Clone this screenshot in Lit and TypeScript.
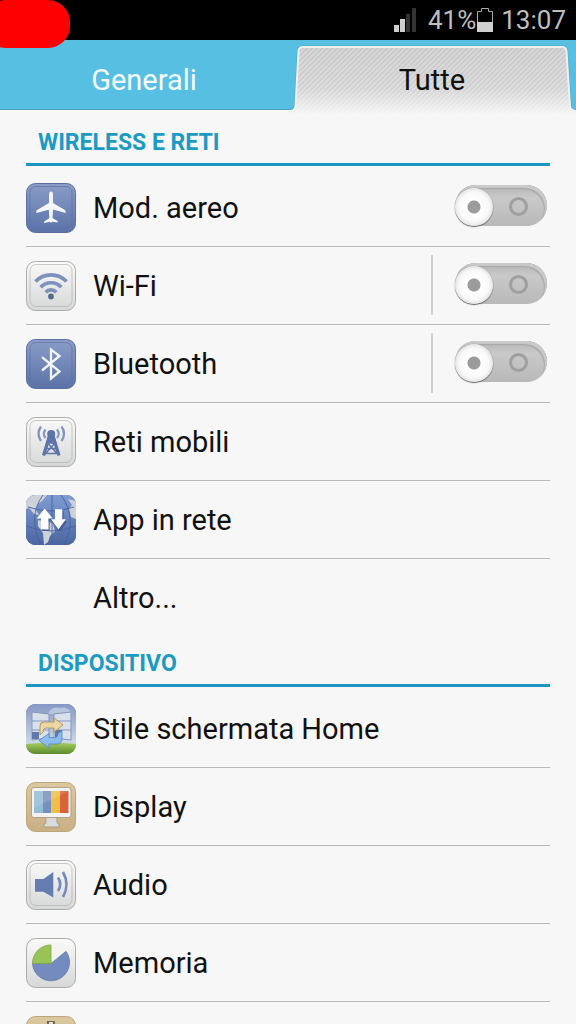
import { LitElement, html, svg, css, nothing } from "lit";
import type { SVGTemplateResult } from "lit";
import { customElement, property } from "lit/decorators.js";

const TILE_COLOURS: Record<string, [string, string, string]> = {
  blue: ["#8a9dc8", "#5a72a8", "#5a6f9f"],
  light: ["#fafaf8", "#d6d8d8", "#acacac"],
  tan: ["#dcc8a0", "#c9b083", "#bda67c"],
};

const GLYPHS: Record<string, { tile: string; rim?: boolean; art: SVGTemplateResult }> = {
  plane: {
    tile: "blue",
    rim: true,
    art: svg`<path fill="#f4f6fa" d="M25 8.5c1.5 0 2 1.6 2 3.400v8l11.500 6.800c1 .7 1.300 1.600 1.300 3.300l-12.700-3.500-.6 8.500 4.600 2.700c.7.5.8 1 .8 1.900L26 38.800 25 40l-1-1.200-6 1.100c0-.9.1-1.400.8-1.900l4.600-2.700-.6-8.500L10.200 30c0-1.700.3-2.600 1.300-3.300L23 19.900v-8c0-1.800.5-3.400 2-3.400z"/>`,
  },
  wifi: {
    tile: "light",
    rim: true,
    art: svg`<g fill="none" stroke="#7d91be" stroke-width="3.600">
        <path d="M9.500 20.500A21.500 21.500 0 0 1 40.500 20.500"/>
        <path d="M14.700 26.200A14 14 0 0 1 35.300 26.200"/>
        <path d="M19.600 31.200A7.500 7.500 0 0 1 30.400 31.200"/></g>
      <circle cx="25" cy="35.500" r="2.900" fill="#56688c"/>`,
  },
  bluetooth: {
    tile: "blue",
    rim: true,
    art: svg`<path fill="none" stroke="#f2f5fb" stroke-width="2.300" d="M16 18.200 33.500 32.500 25 39.500V10.500L33.500 17 16 31.500"/>`,
  },
  tower: {
    tile: "light",
    rim: true,
    art: svg`<g fill="none" stroke="#5d74a8" stroke-width="2">
        <path d="M23.500 19 17.500 38.500M27 19 33 38.500" stroke-width="3.200"/>
        <path d="M21.500 26h7.500M20 31.500h10.500M19 36.500h13M21.500 26 31 36.500M29 26 19.500 36.500" stroke-width="1.500"/>
        <g stroke="#8496bd" stroke-width="2.400"><path d="M19.500 12.500a6.500 6.500 0 0 0 0 8.500M31 12.500a6.500 6.500 0 0 1 0 8.500"/>
        <path d="M15 9.500a12 12 0 0 0 0 14.500M35.500 9.500a12 12 0 0 1 0 14.500"/></g></g>
      <path fill="#5d74a8" d="M22 19h6.500l2 7H20z"/>
      <circle cx="25.200" cy="17" r="4" fill="#5d74a8"/>`,
  },
  globe: {
    tile: "blue",
    art: svg`<clipPath id="globe-clip"><rect width="50" height="50" rx="9"/></clipPath>
      <linearGradient id="globe-sea" x2="0" y2="1"><stop stop-color="#809cd4"/><stop offset="1" stop-color="#4a66a0"/></linearGradient>
      <g clip-path="url(#globe-clip)">
        <rect width="50" height="50" fill="url(#globe-sea)"/>
        <path fill="#ccd2d8" d="M0 0h21l-4 5-5 4-2 6 3 5-5-1-5-6-3 1zM42 4l8 2v18l-5-2-2-8 3-4zM12 25l6-1 9 5 2 7-5 5-2 6-4 3-1-12-5-7z"/>
        <path fill="none" stroke="#45629f" stroke-width=".9" d="M26 0v50M17 0Q1 22 15 50M35 0q17 24 3 50M2 12q23 8 46 0M0 31q25 10 50 0"/>
        <path fill="#263c70" opacity=".45" d="M20 15.600 28 25.600H24V36H16V25.600H12zM30.500 16h7.300v10.300h3.500L34 36.300l-8-10h4.500z"/>
        <path fill="#fff" d="M18.700 13.600 26.700 23.600H22.400V34.300H15V23.600H10.700zM29 14.300h7.300v10h3.500L32.500 34.300 25 24.300h4z"/>
      </g>`,
  },
  home: {
    tile: "blue",
    art: svg`<clipPath id="home-clip"><rect width="50" height="50" rx="9"/></clipPath>
      <linearGradient id="home-sky" x2="0" y2="1"><stop stop-color="#8498c4"/><stop offset=".75" stop-color="#c9d6e6"/></linearGradient>
      <linearGradient id="home-grass" x2="0" y2="1"><stop stop-color="#a6cf60"/><stop offset="1" stop-color="#5c8a2c"/></linearGradient>
      <g clip-path="url(#home-clip)">
        <rect width="50" height="50" fill="url(#home-sky)"/>
        <path fill="#b6c5de" d="M22 10q3-8 12-6 8-2 12 6z"/>
        <path fill="url(#home-grass)" d="M0 40q25-3 50 0v10H0z"/>
        <g fill="#d8e0ec" stroke="#8597b8" stroke-width="1"><path d="M6 8l17 2v24l-17 2zM28 10l17-2v28l-17-2z"/><path d="M6 17h17M6 26h17M28 17h17M28 26h17"/></g>
        <path fill="#6078aa" d="M6 28h7v7H6zM29 26h7v9h-7z"/>
        <path fill="#ecd6a2" stroke="#a98c55" stroke-width=".8" d="M14 31v-9q0-4 4-4h10v-4l9 7-9 7v-4h-8q-3 0-3 4z"/>
        <path fill="#8dbcee" stroke="#5886bf" stroke-width=".8" d="M36 27v7q0 6-5 6h-8v4l-10-7.500 10-7v4h6q3 0 3-4z"/>
      </g>`,
  },
  display: {
    tile: "tan",
    art: svg`<path fill="#d9dadc" stroke="#9b8c70" stroke-width=".7" d="M20 35h11v6l2 1v3H18v-3l2-1z"/>
      <rect x="5.500" y="5.500" width="39.500" height="30" rx="2.500" fill="#f3f3f3" stroke="#a39577" stroke-width=".8"/>
      <path fill="#94bdd6" d="M8 9h9v22H8z"/><path fill="#7890bc" d="M17 9h8v22h-8z"/><path fill="#efbf48" d="M25 9h9v22h-9z"/><path fill="#d9633a" d="M34 9h8.500v22H34z"/>
      <path fill="#fff" opacity=".15" d="M8 9h34.500L8 26z"/>`,
  },
  audio: {
    tile: "light",
    rim: true,
    art: svg`<path fill="#647cb0" d="M9 19h8.500L27.300 12v25.500L17.500 31.700H9z"/>
      <g fill="none" stroke="#7288b8" stroke-width="2.600"><path d="M32 17.500q4.500 7 0 13.500"/><path d="M37 12q7 12.500 0 25"/></g>`,
  },
  memory: {
    tile: "light",
    art: svg`<path fill="#748bbf" stroke="#5f74a4" stroke-width=".7" d="M25 25.500 40 13.300A18.600 18.600 0 1 1 6.400 25.500z"/>
      <path fill="#97c455" stroke="#7ca046" stroke-width=".7" d="M25 25.500H6.400A18.600 18.600 0 0 1 25 6.900z"/>
      <path fill="#f3f3f0" d="M26 7a18.600 18.600 0 0 1 13.500 5.500L26 23.500z"/>`,
  },
  battery: {
    tile: "tan",
    art: svg`<path fill="#6e675a" d="M21 5h8v3h6v34H15V8h6z"/><path fill="#e7e1d2" d="M23 6h4v4h-4z"/>`,
  },
};

@customElement("tile-icon")
export class TileIcon extends LitElement {
  @property() name = "";

  static styles = css`
    :host { display: block; width: 50px; height: 50px; flex: none; }
    .art { display: block; width: 100%; height: 100%; }
  `;

  render() {
    const glyph = GLYPHS[this.name];
    if (!glyph) return nothing;
    const [top, bottom, edge] = TILE_COLOURS[glyph.tile];
    return html`<svg class="art" viewBox="0 0 50 50" aria-hidden="true">
      <linearGradient id="tile" x2="0" y2="1">
        <stop stop-color=${top} /><stop offset="1" stop-color=${bottom} />
      </linearGradient>
      <rect x=".5" y=".5" width="49" height="49" rx="9" fill="url(#tile)" stroke=${edge} />
      ${glyph.rim
        ? svg`<rect x="4" y="3.500" width="42" height="42" rx="6" fill="none" stroke=${edge} stroke-width=".8" opacity=".8"/>`
        : nothing}
      ${glyph.art}
    </svg>`;
  }
}

interface Entry {
  icon?: string;
  label: string;
  toggle?: boolean;
  split?: boolean;
}

const SECTIONS: { title: string; entries: Entry[] }[] = [
  {
    title: "WIRELESS E RETI",
    entries: [
      { icon: "plane", label: "Mod. aereo", toggle: true },
      { icon: "wifi", label: "Wi-Fi", toggle: true, split: true },
      { icon: "bluetooth", label: "Bluetooth", toggle: true, split: true },
      { icon: "tower", label: "Reti mobili" },
      { icon: "globe", label: "App in rete" },
      { label: "Altro..." },
    ],
  },
  {
    title: "DISPOSITIVO",
    entries: [
      { icon: "home", label: "Stile schermata Home" },
      { icon: "display", label: "Display" },
      { icon: "audio", label: "Audio" },
      { icon: "memory", label: "Memoria" },
      { icon: "battery", label: "" },
    ],
  },
];

@customElement("app-root")
export class AppRoot extends LitElement {
  static styles = css`
    :host {
      display: flex;
      flex-direction: column;
      position: relative;
      height: 100vh;
      overflow: hidden;
      background: #f7f7f7;
      color: #111;
      font: 29px/36px Roboto, "Noto Sans", sans-serif;
    }
    .status {
      flex: none;
      display: flex;
      align-items: center;
      justify-content: flex-end;
      height: 40px;
      padding-right: 10px;
      background: #000;
      color: #bebebe;
      font-size: 26px;
    }
    .signal { width: 24px; height: 24px; margin-right: 11px; }
    .battery { width: 16px; height: 24px; margin: 0 8px 0 1px; }
    .blob {
      position: absolute;
      top: 0;
      left: -16px;
      width: 86px;
      height: 48px;
      border-radius: 22px;
      background: #f00;
    }
    .tabs {
      flex: none;
      display: grid;
      grid-template-columns: 1fr 1fr;
      height: 76px;
      background: linear-gradient(#57c0e2 0 69px, #4b9fbd 69px 70px, #fafafa 70px, #f7f7f7);
    }
    .tab {
      position: relative;
      height: 79px;
      padding: 0;
      border: 0;
      background: none;
      color: #f4fbfd;
      font: inherit;
    }
    .tab.active { color: #111; }
    .shape { position: absolute; inset: 0; width: 100%; height: 76px; }
    .caption { position: relative; }
    .content { flex: 1; min-height: 0; overflow-y: auto; scrollbar-width: none; padding: 0 26px; }
    .title {
      box-sizing: border-box;
      height: 50px;
      margin: 0;
      padding: 12px 12px 0;
      border-bottom: 3px solid #1b96c1;
      color: #1b9bc3;
      font-size: 23px;
      line-height: 30px;
      font-weight: 700;
    }
    .list { list-style: none; margin: 0; padding: 3px 0 0; }
    .row {
      box-sizing: border-box;
      display: flex;
      align-items: center;
      height: 78px;
      border-bottom: 1px solid #bababa;
    }
    .row:last-child { border-bottom-color: transparent; }
    .entry {
      flex: 1;
      display: flex;
      align-items: center;
      gap: 17px;
      color: inherit;
      text-decoration: none;
    }
    .blank { width: 50px; }
    .split { width: 2px; height: 60px; background: #d0d0d0; margin: 0 22px 2px 0; }
    .switch {
      appearance: none;
      box-sizing: border-box;
      display: flex;
      align-items: center;
      justify-content: space-between;
      width: 92px;
      height: 41px;
      margin: 0 3px 5px 0;
      padding: 3px 19px 0 0;
      border-radius: 21px;
      background: linear-gradient(#b4b4b4, #c9c9c9 30%, #b8b8b8);
      box-shadow: inset -2px 3px 1px #cacaca, inset -3px 4px 1px #a6a6a6;
    }
    .switch::before {
      content: "";
      width: 38px;
      height: 38px;
      border-radius: 50%;
      background: radial-gradient(circle, #9c9c9c 6px, #fff 7px, #f8f8f8 15px, #e4e4e4 19px);
      box-shadow: 0 1px 1px #666, 0 0 1px #888;
    }
    .switch::after {
      content: "";
      box-sizing: border-box;
      width: 19px;
      height: 19px;
      border: 3px solid #9f9f9f;
      border-radius: 50%;
    }
    .switch:checked { flex-direction: row-reverse; padding: 3px 0 0 19px; }
  `;

  private renderRow(entry: Entry, id: string) {
    const body = html`${entry.icon
        ? html`<tile-icon name=${entry.icon}></tile-icon>`
        : html`<span class="blank"></span>`}<span>${entry.label}</span>`;
    const lead =
      entry.toggle && !entry.split
        ? html`<label class="entry" for=${id}>${body}</label>`
        : html`<a class="entry" href="#${id}">${body}</a>`;
    return html`<li class="row">
      ${lead}
      ${entry.split ? html`<span class="split"></span>` : nothing}
      ${entry.toggle
        ? html`<input class="switch" type="checkbox" role="switch" id=${id} aria-label=${entry.label} />`
        : nothing}
    </li>`;
  }

  render() {
    return html`
      <header class="status">
        <svg class="signal" viewBox="0 0 24 24" aria-hidden="true">
          <path fill="#cfcfcf" d="M1 17h5v7H1zM7 11h5v13H7z" />
          <path fill="#333" d="M13 6h4v18h-4zM19 0h4v24h-4z" />
        </svg>
        <span>41%</span>
        <svg class="battery" viewBox="0 0 16 24" aria-hidden="true">
          <path fill="none" stroke="#aaa" d="M.5 23.500V3.500h4v-3h7v3h4v20z" />
          <path fill="#cfcfcf" d="M0 14h16v10H0z" />
        </svg>
        <span>13:07</span>
      </header>
      <nav class="tabs" role="tablist">
        <button class="tab" role="tab" aria-selected="false"><span class="caption">Generali</span></button>
        <button class="tab active" role="tab" aria-selected="true">
          <svg class="shape" viewBox="0 0 288 76" preserveAspectRatio="none" aria-hidden="true">
            <pattern id="hatch" width="5" height="5" patternUnits="userSpaceOnUse">
              <path stroke="#fff" stroke-opacity=".3" stroke-width="1.500" d="M-1 6 6 -1M-1 1 1 -1M4 6 6 4" />
            </pattern>
            <linearGradient id="face" x2="0" y2="1">
              <stop stop-color="#c8c8c8" /><stop offset=".6" stop-color="#d2d2d2" /><stop offset="1" stop-color="#f7f7f7" />
            </linearGradient>
            <path fill="url(#face)" d="M0 76V71H3Q7 70 7.500 66L10.500 11Q11 7 15 7H274Q278 7 278.500 11L282 66Q282 70 286 71H288V76z" />
            <path fill="url(#hatch)" d="M0 76V71H3Q7 70 7.500 66L10.500 11Q11 7 15 7H274Q278 7 278.500 11L282 66Q282 70 286 71H288V76z" />
            <path fill="none" stroke="#4fa9c8" d="M0 69.500H2Q6 69 6.500 65L9.500 10Q10 6 14 6H275Q279 6 279.500 10L283 65Q283 69 288 69.500" />
            <path fill="none" stroke="#f0f0ec" stroke-width="2" d="M0 71H3Q7 70 7.500 66L10.500 11Q11 7 15 7H274Q278 7 278.500 11L282 66Q282 70 288 71" />
          </svg>
          <span class="caption">Tutte</span>
        </button>
      </nav>
      <main class="content">
        ${SECTIONS.map(
          (section, s) => html`<section>
            <h2 class="title">${section.title}</h2>
            <ul class="list">
              ${section.entries.map((entry, i) => this.renderRow(entry, `item-${s}-${i}`))}
            </ul>
          </section>`,
        )}
      </main>
      <div class="blob"></div>
    `;
  }
}
